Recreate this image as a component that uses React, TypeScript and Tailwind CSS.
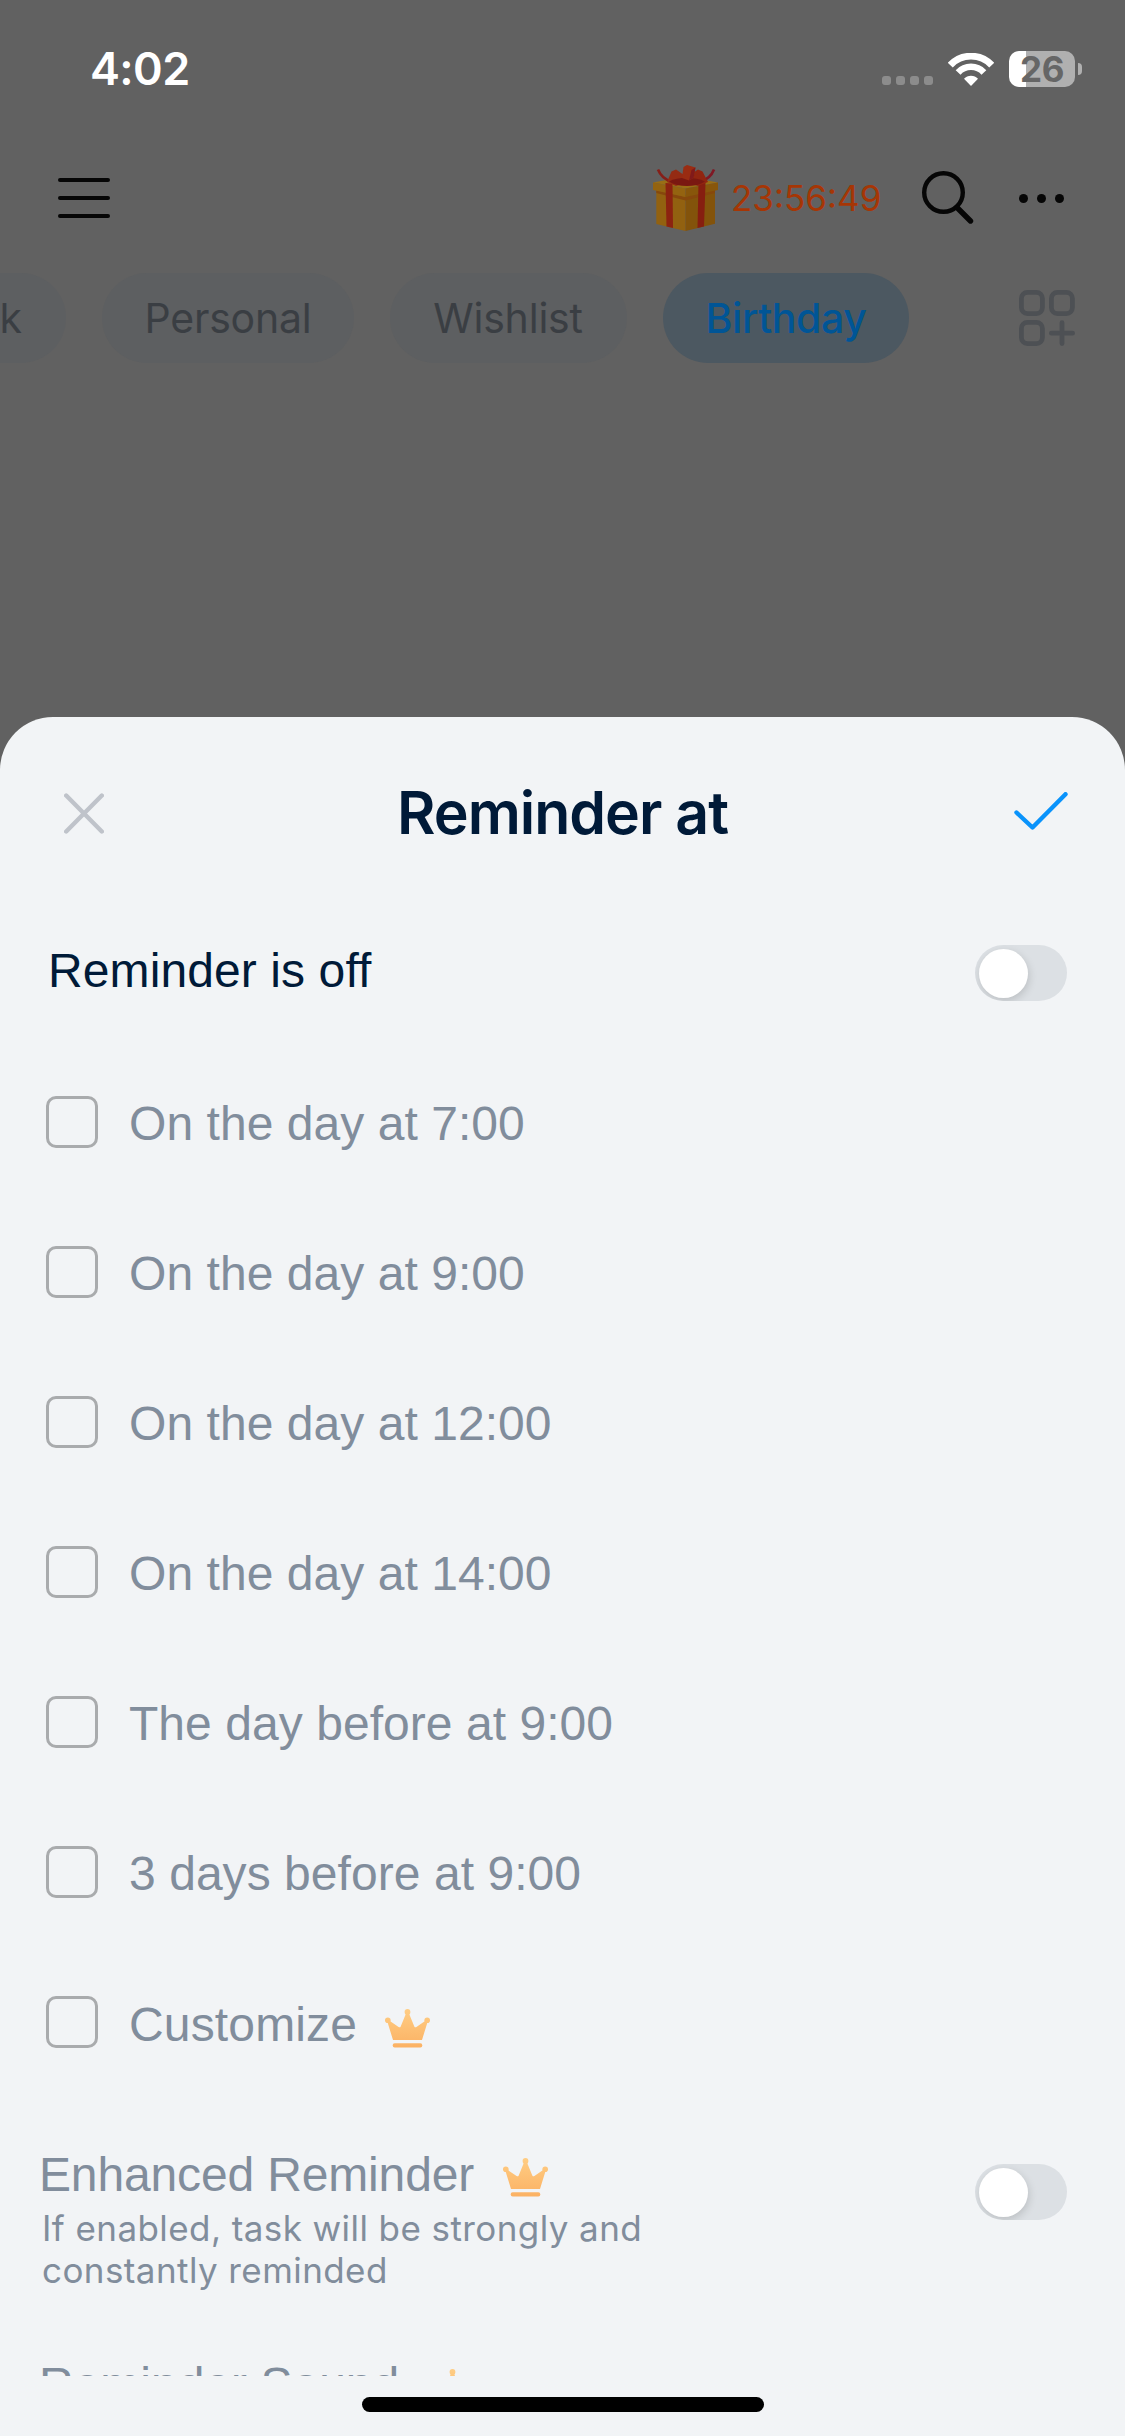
import { clsx } from "clsx";

const categories = [
  { label: "Personal", className: "w-[252px] tracking-[-0.2px]" },
  { label: "Wishlist", className: "w-[237px] pr-px tracking-[-0.2px]" },
  { label: "Birthday", className: "w-[246px] tracking-[-0.4px]", active: true },
];

const options = [
  "On the day at 7:00",
  "On the day at 9:00",
  "On the day at 12:00",
  "On the day at 14:00",
  "The day before at 9:00",
  "3 days before at 9:00",
];

function WifiIcon() {
  return (
    <svg width="46" height="33" viewBox="0 0 46 33" fill="none">
      <path d="M2.3 12.1A28.4 28.4 0 0 1 43.7 12.1" stroke="white" strokeWidth="6.8" />
      <path d="M10.1 19.4A17.7 17.7 0 0 1 35.9 19.4" stroke="white" strokeWidth="6.6" />
      <path d="M23 33L16 25.8A9.5 9.5 0 0 1 30 25.8Z" fill="white" />
    </svg>
  );
}

function GiftIcon() {
  return (
    <svg width="68" height="66" viewBox="0 0 68 66" fill="none">
      {/* box */}
      <path d="M4.3 24L33.5 30V66L4.3 59Z" fill="#926110" />
      <path d="M33.5 30L63 24V58.7L33.5 66Z" fill="#83530b" />
      <path d="M4.3 25L33.5 32L63 25V28L33.5 35.5L4.3 28Z" fill="#86480c" />
      {/* lid */}
      <path d="M1 17.5L33 11.5L66 17.5L33.5 23.5Z" fill="#9a6e15" />
      <path d="M1 17.5L33.5 23.5V32L1 25Z" fill="#946310" />
      <path d="M66 17.5L33.5 23.5V32L66 25Z" fill="#88560b" />
      {/* ribbons */}
      <path d="M13.5 18L20.5 18.5L21 63L14.5 61.5Z" fill="#8c2310" />
      <path d="M46.5 18.5L53.5 18L52 61.5L45.5 63Z" fill="#861e10" />
      <path d="M6 4.5C8.5 11 12.5 14.5 20 17" stroke="#861f18" strokeWidth="2.6" />
      <path d="M62 4.5C59.5 11 56 14.5 48 17" stroke="#801824" strokeWidth="2.6" />
      {/* bow */}
      <path d="M15 17L19.5 6.5L24 4.5L32 10V18L24 21Z" fill="#952b13" />
      <path d="M56 17L50.5 6.5L46 4.5L38 10V18L46 21Z" fill="#912510" />
      <path d="M17 16.5C26 11.5 43 11.5 53 16.5C44 22.5 26 22.5 17 16.5Z" fill="#7a1811" />
      <path d="M30 13L31.5 2L35 0L43.5 2.5L41.5 13L37 15.5Z" fill="#9a2c12" />
      <path d="M37 15.5L39.5 5L43.5 2.5L41.5 13Z" fill="#801a1a" />
    </svg>
  );
}

function CrownIcon({ className }: { className?: string }) {
  return (
    <svg className={clsx("shrink-0", className)} width="45" height="39" viewBox="0 0 45 39" fill="url(#crown)">
      <defs>
        <linearGradient id="crown" gradientUnits="userSpaceOnUse" x1="0" y1="0" x2="0" y2="39">
          <stop stopColor="#ffcd84" />
          <stop offset="1" stopColor="#fbb163" />
        </linearGradient>
      </defs>
      <circle cx="2.8" cy="11.3" r="2.8" />
      <circle cx="22.5" cy="2.9" r="2.9" />
      <circle cx="42.2" cy="11.3" r="2.8" />
      <path d="M8 31L2.3 12.5L4.2 11.6L13.6 18Q15 18.8 15.7 17.4L21.2 4H23.8L29.3 17.4Q30 18.8 31.4 18L40.8 11.6L42.7 12.5L37 31Z" />
      <rect x="7.7" y="34.3" width="29.6" height="4.2" rx="1.9" />
    </svg>
  );
}

function Toggle({ className }: { className?: string }) {
  return (
    <div
      className={clsx(
        "flex h-14 w-[92px] shrink-0 items-center overflow-hidden rounded-full bg-[#dce0e4] px-[3.5px]",
        className
      )}
    >
      <div className="size-[49px] rounded-full bg-white shadow-[1px_3px_9px_rgba(0,0,0,0.15)]" />
    </div>
  );
}

function Checkbox() {
  return <div className="size-[52px] shrink-0 rounded-[10px] border-[3px] border-[#a9abad]" />;
}

function StatusBar() {
  return (
    <div className="flex h-[138px] shrink-0 items-center justify-between pr-[43px] pl-[90px]">
      <span className="pb-0.5 text-[45px] leading-none font-semibold tracking-[-0.6px] text-white">4:02</span>
      <div className="flex items-center gap-[15px]">
        <div className="mt-[23px] flex gap-[5px]">
          {[0, 1, 2, 3].map((i) => (
            <span key={i} className="size-[9px] rounded-[3px] bg-[#8c8c8c]" />
          ))}
        </div>
        <WifiIcon />
        <div className="flex items-center gap-[3px]">
          <div className="flex h-9 w-[66px] items-center justify-center rounded-[10px] bg-linear-to-r from-white from-[17px] to-[#b0b0b0] to-[17px]">
            <span className="text-[35px] leading-none font-bold tracking-[-0.5px] text-[#666666]">26</span>
          </div>
          <span className="h-3 w-1 rounded-r-full bg-[#b0b0b0]" />
        </div>
      </div>
    </div>
  );
}

function TopNav() {
  return (
    <div className="flex h-30 shrink-0 items-center pr-[61px] pl-[58px]">
      <div className="flex w-[52px] flex-col gap-3.5">
        <span className="h-1 rounded-full bg-[#060606]" />
        <span className="h-1 rounded-full bg-[#060606]" />
        <span className="h-1 rounded-full bg-[#060606]" />
      </div>
      <div className="ml-auto flex items-center">
        <GiftIcon />
        <span className="ml-[11px] w-[191px] text-[35px] leading-none text-[#a63605]">23:56:49</span>
        <svg className="-mt-[3px]" width="52" height="54" viewBox="0 0 52 54" fill="none" stroke="#060606">
          <circle cx="21.5" cy="22.5" r="19.3" strokeWidth="4.4" />
          <path d="M35.5 38L48.5 51" strokeWidth="5.4" strokeLinecap="round" />
        </svg>
        <div className="ml-[45px] flex gap-[9px]">
          <span className="size-[9px] rounded-full bg-[#060606]" />
          <span className="size-[9px] rounded-full bg-[#060606]" />
          <span className="size-[9px] rounded-full bg-[#060606]" />
        </div>
      </div>
    </div>
  );
}

function CategoryBar() {
  return (
    <div className="flex h-30 shrink-0 items-center gap-9 pr-[50px]">
      {/* Scrolled half out of view */}
      <div className="flex h-[90px] w-[66px] items-center justify-end overflow-hidden rounded-r-full bg-[#5d5f61] pt-0.5 pr-11 text-[41px] text-[#3a3e43]">
        <span>Work</span>
      </div>
      {categories.map(({ label, className, active }) => (
        <div
          key={label}
          className={clsx(
            "flex h-[90px] items-center justify-center rounded-full pt-0.5 text-[41px]",
            active ? "bg-[#4c5861] font-medium text-[#005596]" : "bg-[#5d5f61] text-[#3a3e43]",
            className
          )}
        >
          {label}
        </div>
      ))}
      <svg className="ml-auto" width="56" height="56" viewBox="0 0 56 56" fill="none" stroke="#4d5054" strokeWidth="4.8">
        <rect x="2.4" y="2.4" width="21" height="21.2" rx="6" />
        <rect x="32.4" y="2.4" width="21" height="21.2" rx="6" />
        <rect x="2.4" y="32.4" width="21" height="21.2" rx="6" />
        <path d="M43 32.7V53.6M32.4 43.2H53.6" strokeLinecap="round" />
      </svg>
    </div>
  );
}

export default function App() {
  return (
    <div className="flex h-[2436px] w-[1125px] flex-col overflow-hidden bg-[#616161] font-['Inter',sans-serif]">
      <StatusBar />
      <TopNav />
      <CategoryBar />

      {/* Bottom sheet */}
      <div className="mt-auto flex h-[1719px] shrink-0 flex-col rounded-t-[53px] bg-[#f2f4f6]">
        <div className="flex h-48 shrink-0 items-center justify-between pr-[56px] pl-[64px]">
          <svg width="40" height="41" viewBox="0 0 40 41" fill="none" stroke="#bfc3ca" strokeWidth="4.4" strokeLinecap="round">
            <path d="M2.2 2.5L37.8 38.5M37.8 2.5L2.2 38.5" />
          </svg>
          <h1 className="pb-0.5 pl-2 text-[59px] leading-none font-semibold tracking-[-1px] text-[#001a38]">Reminder at</h1>
          <svg className="-mt-1" width="56" height="38" viewBox="0 0 56 38" fill="none" stroke="#0a93fb" strokeWidth="4.4" strokeLinecap="round" strokeLinejoin="round">
            <path d="M3.5 20.5L19.5 35.5L52.5 2.2" />
          </svg>
        </div>

        <div className="h-[1467px] shrink-0 overflow-hidden font-['Liberation_Sans',Arial,sans-serif] text-5xl text-[#818d9c]">
          <div className="flex h-32 items-center justify-between pr-[58px] pl-12">
            <span className="pb-1 tracking-[0.1px] text-[#001a38]">Reminder is off</span>
            <Toggle />
          </div>

          <div className="mt-2.5">
            {options.map((option) => (
              <div key={option} className="flex h-[150px] items-center gap-[31px] pl-[46px]">
                <Checkbox />
                <span className="pt-[3px] tracking-[0.05px]">{option}</span>
              </div>
            ))}
            <div className="flex h-[150px] items-center pl-[46px]">
              <Checkbox />
              <span className="ml-[31px] pt-[5px] tracking-[0.15px]">Customize</span>
              <CrownIcon className="mt-3 ml-7" />
            </div>
          </div>

          <div className="mt-12 flex items-start justify-between pr-[58px] pl-[39px]">
            <div>
              <div className="flex h-[58px] items-center">
                <span className="pt-0.5 tracking-[-0.15px]">Enhanced Reminder</span>
                <CrownIcon className="mt-[7px] ml-[29px]" />
              </div>
              <p className="mt-1 w-[640px] pl-[3px] font-['Inter',sans-serif] text-[35px] leading-[42px] tracking-[0.42px]">
                If enabled, task will be strongly and
                <br />
                constantly reminded
              </p>
            </div>
            <Toggle className="mt-[19px]" />
          </div>

          {/* Next row, cut off by the scroll area */}
          <div className="mt-[65px] flex h-[58px] items-center pl-[39px]">
            <span>Reminder Sound</span>
            <CrownIcon className="mt-[7px] ml-[31px]" />
          </div>
        </div>

        {/* Home indicator */}
        <div className="mx-auto mt-[21px] h-[15px] w-[402px] shrink-0 rounded-full bg-black" />
      </div>
    </div>
  );
}
